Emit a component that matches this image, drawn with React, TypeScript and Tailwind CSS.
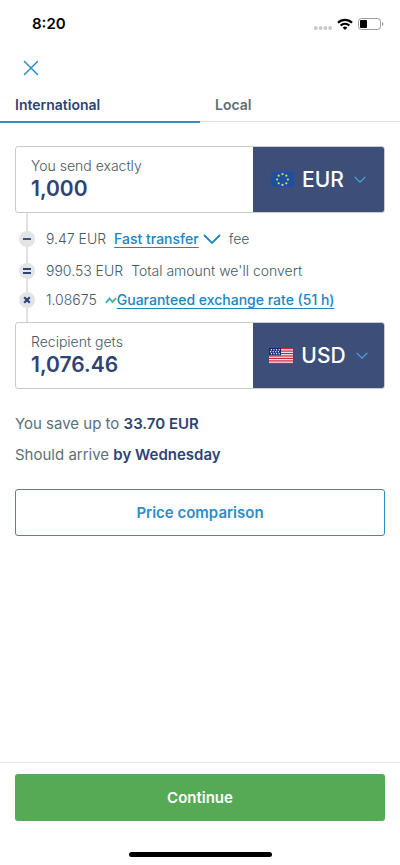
import { useState, type ReactNode } from "react";

function SignalDots() {
  return (
    <svg className="h-1 w-[18px]" viewBox="0 0 18 4" fill="#c9c9cb" aria-hidden="true">
      <rect x="0" y="0.300" width="3.600" height="3.600" rx="1.300" />
      <rect x="4.800" y="0.300" width="3.600" height="3.600" rx="1.300" />
      <rect x="9.600" y="0.300" width="3.600" height="3.600" rx="1.300" />
      <rect x="14.400" y="0.300" width="3.600" height="3.600" rx="1.300" />
    </svg>
  );
}

function WifiIcon() {
  return (
    <svg className="h-3 w-4" viewBox="0 0 16 12" fill="none" stroke="#000" aria-hidden="true">
      <path d="M1 4.800a10 10 0 0 1 14 0" strokeWidth="2.200" />
      <path d="M3.600 7.500a6.300 6.300 0 0 1 8.800 0" strokeWidth="2" />
      <path d="M8 12 5.700 9.700a3.300 3.300 0 0 1 4.600 0z" fill="#000" stroke="none" />
    </svg>
  );
}

function BatteryIcon() {
  return (
    <svg className="h-3 w-[26px]" viewBox="0 0 26 12" aria-hidden="true">
      <rect x="0.5" y="0.5" width="22" height="11" rx="3" fill="none" stroke="#9b9b9b" />
      <rect x="2" y="2" width="7" height="8" rx="1" fill="#000" />
      <path d="M24 4v4c.8-.3 1.4-1.1 1.4-2S24.800 4.300 24 4z" fill="#9b9b9b" />
    </svg>
  );
}

function Chevron({ className }: { className: string }) {
  return (
    <svg className={className} viewBox="0 0 18 10" fill="none" stroke="currentColor" aria-hidden="true">
      <path d="M1 1l8 8 8-8" strokeWidth="1.800" />
    </svg>
  );
}

const STARS = Array.from({ length: 8 }, (_, i) => {
  const a = (i * Math.PI) / 4;
  return [11.5 + 5.4 * Math.sin(a), 7.5 - 5.4 * Math.cos(a)];
});

function EuFlag() {
  return (
    <svg className="h-[15px] w-[23px]" viewBox="0 0 23 15" aria-hidden="true">
      <rect width="23" height="15" fill="#1e4fa0" />
      {STARS.map(([x, y], i) => (
        <circle key={i} cx={x} cy={y} r="1.1" fill="#e3e032" />
      ))}
    </svg>
  );
}

function UsFlag() {
  return (
    <svg className="h-4 w-6" viewBox="0 0 24 16" aria-hidden="true">
      <rect width="24" height="16" fill="#f7f1f3" />
      {[0, 1, 2, 3, 4, 5, 6].map((i) => (
        <rect key={i} y={i * 2.46} width="24" height="1.230" fill="#c8243c" />
      ))}
      <rect width="12" height="7.4" fill="#122a72" />
      {[2.400, 5, 7.600, 10.200].map((x) => (
        <g key={x} fill="#fff">
          <circle cx={x} cy="1.700" r="0.700" />
          <circle cx={x - 0.8} cy="3.700" r="0.700" />
          <circle cx={x} cy="5.700" r="0.700" />
        </g>
      ))}
    </svg>
  );
}

function AmountField({
  id,
  label,
  initial,
  currency,
  flag,
}: {
  id: string;
  label: string;
  initial: string;
  currency: string;
  flag: ReactNode;
}) {
  const [value, setValue] = useState(initial);
  const [code, setCode] = useState(currency);
  return (
    <div className="flex overflow-hidden rounded-[3px] border border-[#c9cbce]">
      <div className="flex min-w-0 flex-1 flex-col pt-[9px] pb-[11px] pl-[15px]">
        <label htmlFor={id} className="text-sm leading-5 font-light">
          {label}
        </label>
        <input
          id={id}
          value={value}
          onChange={(e) => setValue(e.target.value)}
          inputMode="decimal"
          className="h-[25px] w-full bg-transparent text-[21px] font-semibold text-[#2e4374] outline-none"
        />
      </div>
      <div className="flex w-[131px] items-center justify-center gap-2 bg-[#3d4f78] text-white">
        {flag}
        <select
          aria-label={`${label} currency`}
          value={code}
          onChange={(e) => setCode(e.target.value)}
          className="field-sizing-content appearance-none bg-transparent text-[21px] leading-7 font-medium outline-none"
        >
          <option>EUR</option>
          <option>USD</option>
        </select>
        <Chevron className="ml-0.5 h-[7px] w-3 text-[#45a8e6]" />
      </div>
    </div>
  );
}

function Badge({ children }: { children: ReactNode }) {
  return (
    <svg
      className="-ml-[9px] mr-[11px] h-4 w-4 shrink-0"
      viewBox="0 0 16 16"
      fill="none"
      stroke="#2e4374"
      strokeWidth="1.800"
      aria-hidden="true"
    >
      <circle cx="8" cy="8" r="8" fill="#e2e5e8" stroke="none" />
      {children}
    </svg>
  );
}

export default function App() {
  return (
    <div className="flex min-h-screen flex-col bg-white font-['Inter',sans-serif] text-[#465a64]">
      <div className="flex h-12 items-center justify-between pr-4 pl-8">
        <span className="text-[15px] font-semibold text-black">8:20</span>
        <div className="flex items-center gap-[5px]">
          <div className="pt-[7px]">
            <SignalDots />
          </div>
          <WifiIcon />
          <BatteryIcon />
        </div>
      </div>

      <header className="flex h-10 items-center px-[23px]">
        <button type="button" aria-label="Close">
          <svg className="h-4 w-4" viewBox="0 0 16 16" fill="none" stroke="#2f8dc5" aria-hidden="true">
            <path d="M1 1l14 14M15 1L1 15" strokeWidth="1.500" />
          </svg>
        </button>
      </header>

      <div role="tablist" className="grid grid-cols-2 items-start text-sm leading-5 font-semibold">
        <button
          type="button"
          role="tab"
          aria-selected="true"
          className="h-[35px] border-b-2 border-[#2f8dc5] px-[15px] text-left text-[#2e4374]"
        >
          International
        </button>
        <button
          type="button"
          role="tab"
          aria-selected="false"
          className="h-[34px] border-b border-[#dfe1e3] px-[15px] text-left text-[#5d7079]"
        >
          Local
        </button>
      </div>

      <main className="flex-1 px-[15px] pt-[23px]">
        <AmountField id="send" label="You send exactly" initial="1,000" currency="EUR" flag={<EuFlag />} />

        <ul className="ml-[11px] border-l-2 border-[#dfe1e3] pt-2.5 pb-[9px] text-sm font-light">
          <li className="flex h-8 items-center">
            <Badge>
              <path d="M4 8h8" />
            </Badge>
            <span>9.47 EUR</span>
            <button type="button" className="ml-2 flex items-center gap-1 font-medium text-[#2384c0]">
              <span className="underline underline-offset-3">Fast transfer</span>
              <Chevron className="h-2.5 w-[18px]" />
            </button>
            <span className="ml-2">fee</span>
          </li>
          <li className="flex h-8 items-center">
            <Badge>
              <path d="M4 6h8M4 10h8" />
            </Badge>
            <span>990.53 EUR</span>
            <span className="ml-2">Total amount we'll convert</span>
          </li>
          <li className="flex h-[26px] items-center">
            <Badge>
              <path d="M5.200 5.200l5.600 5.600M10.800 5.200l-5.600 5.600" strokeWidth="2.200" />
            </Badge>
            <span>1.08675</span>
            <svg className="ml-2 h-[7px] w-3" viewBox="0 0 12 7" fill="none" aria-hidden="true">
              <defs>
                <linearGradient id="trend" x1="0" x2="1">
                  <stop offset="0" stopColor="#2fa8e0" />
                  <stop offset="1" stopColor="#4fc26b" />
                </linearGradient>
              </defs>
              <path d="M1 5.800L4.500 1.500 7.500 5 11 1.200" stroke="url(#trend)" strokeWidth="1.900" />
            </svg>
            <a href="#rate" className="font-medium text-[#2384c0] underline underline-offset-3">
              Guaranteed exchange rate (51 h)
            </a>
          </li>
        </ul>

        <AmountField id="receive" label="Recipient gets" initial="1,076.46" currency="USD" flag={<UsFlag />} />

        <p className="mt-[23px] text-[15px] leading-6 text-[#5d7079]">
          You save up to <strong className="font-semibold text-[#2e4374]">33.70 EUR</strong>
        </p>
        <p className="mt-[7px] text-[15px] leading-6 text-[#5d7079]">
          Should arrive <strong className="font-semibold text-[#2e4374]">by Wednesday</strong>
        </p>

        <button
          type="button"
          className="mt-[22px] h-[47px] w-full rounded-[3px] border border-[#2f8dc5] pt-0.5 text-[15px] font-semibold text-[#2f8dc5]"
        >
          Price comparison
        </button>
      </main>

      <footer className="border-t border-[#e2e4e6] px-[15px] pt-[11px] pb-2">
        <button type="button" className="h-[47px] w-full rounded-[3px] bg-[#57aa55] pt-0.5 text-[15px] font-semibold text-white">
          Continue
        </button>
        <div className="mx-auto mt-[31px] h-[5px] w-[143px] rounded-full bg-black" />
      </footer>
    </div>
  );
}
